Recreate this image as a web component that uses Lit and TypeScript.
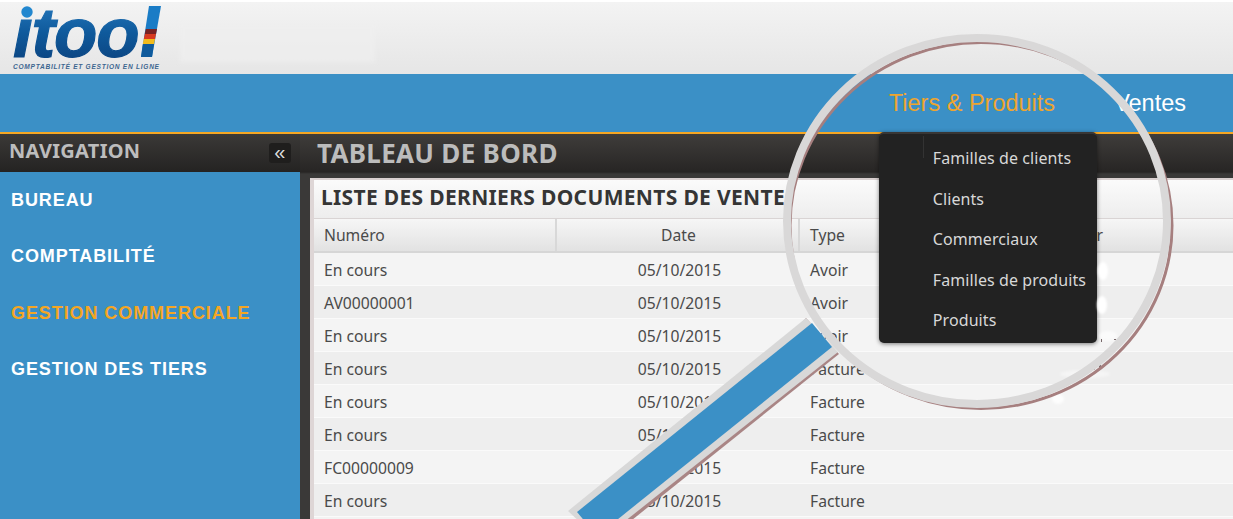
import { LitElement, html, css, svg } from "lit";
import { customElement } from "lit/decorators.js";

const rows: [string, string, string][] = [
  ["En cours", "05/10/2015", "Avoir"],
  ["AV00000001", "05/10/2015", "Avoir"],
  ["En cours", "05/10/2015", "Avoir"],
  ["En cours", "05/10/2015", "Facture"],
  ["En cours", "05/10/2015", "Facture"],
  ["En cours", "05/10/2015", "Facture"],
  ["FC00000009", "05/10/2015", "Facture"],
  ["En cours", "05/10/2015", "Facture"],
];
const side = [
  ["BUREAU", false],
  ["COMPTABILITÉ", false],
  ["GESTION COMMERCIALE", true],
  ["GESTION DES TIERS", false],
] as const;
const drop = ["Familles de clients", "Clients", "Commerciaux", "Familles de produits", "Produits"];

@customElement("app-root")
export class AppRoot extends LitElement {
  static styles = css`
    :host { display: block; width: 1233px; height: 519px; position: relative; overflow: hidden; font-family: "Noto Sans", sans-serif; background: #fff; }
    .top { height: 72px; margin-top: 2px; background: linear-gradient(#f3f3f3, #e6e6e6); display: flex; align-items: flex-start; }
    .logo { display: block; flex: none; }
    .patch { width: 195px; height: 38px; margin: 22px 0 0 10px; background: #efefef; filter: blur(2px); opacity: .7; }
    .logo-text { font-family: "Liberation Sans", sans-serif; font-weight: 700; font-style: italic; font-size: 71px; letter-spacing: -1.2px; stroke: url(#lg); stroke-width: 1.2px; }
    .logo-sub { font-family: "Liberation Sans", sans-serif; font-weight: 700; font-style: italic; font-size: 6.6px; letter-spacing: .72px; fill: #3d6690; }
    .bar { height: 58px; background: #3b90c6; border-bottom: 2px solid #f5a623; display: flex; justify-content: flex-end; align-items: center; gap: 59px; padding-right: 47px; font-family: "Liberation Sans", sans-serif; font-size: 23.5px; color: #fff; }
    .bar .item { position: relative; line-height: 58px; }
    .bar .on { color: #eea52f; }
    .drop { position: absolute; left: -10px; top: 58px; width: 218px; height: 211px; box-sizing: border-box; background: #222; border-radius: 5px; border-top: 2px solid #383635; box-shadow: 0 1px 4px rgba(0,0,0,.5); padding: 4px 0 0 54px; font-family: "Noto Sans", sans-serif; font-size: 16px; letter-spacing: .08px; line-height: 40.5px; color: #d8d8d8; z-index: 2; white-space: nowrap; }
    .drop::before { content: ""; position: absolute; left: 44px; top: 2px; width: 1px; height: 22px; background: #333; }
    .body { display: grid; grid-template-columns: 300px 1fr; height: 385px; }
    .side { background: #3b90c6; padding-left: 1px; box-sizing: border-box; display: flex; flex-direction: column; }
    .side-head { margin-left: -1px; height: 38px; box-sizing: border-box; background: linear-gradient(#3b3937, #242322); display: flex; align-items: center; justify-content: space-between; padding: 0 9px; color: #bdbdbd; font-size: 20px; font-weight: 700; letter-spacing: .3px; }
    .side-head span:first-child { line-height: 34px; height: 38px; }
    .collapse { width: 22px; height: 20px; border-radius: 3px; background: #1f1e1d; color: #ddd; font-size: 20px; font-weight: 400; line-height: 18px; text-align: center; font-family: "Liberation Sans", sans-serif; }
    .side ul { list-style: none; margin: 0; padding: 0 0 0 10px; }
    .side li { height: 56.3px; line-height: 56px; font-size: 18px; font-weight: 700; color: #fff; font-family: "Liberation Sans", sans-serif; white-space: nowrap; letter-spacing: .92px; }
    .side li.on { color: #f5a623; }
    .main { background: linear-gradient(#3f3d3b, #272524 38px, #3a3938 40px); padding: 0 0 0 10px; display: flex; flex-direction: column; min-width: 0; }
    .title { height: 44px; flex: none; padding-left: 7px; font-size: 26px; font-weight: 700; color: #bcbcbc; line-height: 38px; letter-spacing: .3px; white-space: nowrap; }
    .panel { flex: 1; background: #f3f3f3; border-top: 2px solid #d9d0d0; border-left: 4px solid #ded6d6; display: flex; flex-direction: column; min-height: 0; overflow: hidden; }
    .panel h2 { margin: 0 0 0 -3px; height: 39px; flex: none; box-sizing: border-box; border-bottom: 1px solid #d9d4d4; background: linear-gradient(#fbfbfb, #ededed); padding-left: 10px; font-size: 21px; font-weight: 700; line-height: 34px; color: #353535; white-space: nowrap; letter-spacing: .33px; }
    .row { display: grid; grid-template-columns: 243px 243px 1fr 168px; height: 33px; line-height: 34px; font-size: 15.7px; color: #4a4a4a; flex: none; box-sizing: border-box; border-bottom: 1px solid #fafafa; }
    .row > div { padding-left: 10px; white-space: nowrap; }
    .row > .c { padding: 0 0 0 2px; text-align: center; }
    .row:nth-child(odd) { background: #f4f4f4; }
    .row:nth-child(even) { background: #eeeeee; }
    .row.head { height: 34px; line-height: 32px; background: linear-gradient(#f6f6f6, #e2e2e2); border-bottom: 2px solid #d6d6d6; }
    .row.head > div { border-right: 2px solid #d8d8d8; }
    .row.head > div:nth-child(3), .row.head > div:nth-child(4) { border-right: 0; }
    .lens { position: absolute; left: 0; top: 0; z-index: 3; pointer-events: none; }
  `;

  render() {
    return html`
      <div class="top">
        <svg class="logo" width="170" height="72" viewBox="0 2 170 72" aria-label="itool">
          <defs>
            <linearGradient id="lg" x1="0" y1="0" x2="0" y2="1">
              <stop offset="0" stop-color="#2a7fc4" /><stop offset=".5" stop-color="#0f5a9c" /><stop offset="1" stop-color="#0a3d78" />
            </linearGradient>
          </defs>
          <circle cx="27" cy="12" r="5.7" fill="#2287cf" />
          <text class="logo-text" x="13" y="57" fill="url(#lg)">ıtoo</text>
          <path d="M149 6 L161 6 L152 57 L141 57 Z" fill="#1a7cc6" />
          <path d="M145.800 29 L157 29 L156 34 L144.800 34 Z" fill="#7a2222" />
          <path d="M144.800 34 L156 34 L155 39 L143.800 39 Z" fill="#d83a20" />
          <path d="M143.800 39 L155 39 L154 44 L142.800 44 Z" fill="#f2bb1c" />
          <path d="M142.800 44 L154 44 L152 57 L141 57 Z" fill="#0f5a9c" />
          <text class="logo-sub" x="13" y="69">COMPTABILITÉ ET GESTION EN LIGNE</text>
        </svg>
        <div class="patch"></div>
      </div>
      <div class="bar">
        <div class="item on">Tiers &amp; Produits
          <div class="drop">${drop.map((d) => html`<div>${d}</div>`)}</div>
        </div>
        <div class="item">Ventes</div>
      </div>
      <div class="body">
        <aside class="side">
          <div class="side-head"><span>NAVIGATION</span><span class="collapse">«</span></div>
          <ul>${side.map(([t, on]) => html`<li class=${on ? "on" : ""}>${t}</li>`)}</ul>
        </aside>
        <section class="main">
          <div class="title">TABLEAU DE BORD</div>
          <div class="panel">
            <h2>LISTE DES DERNIERS DOCUMENTS DE VENTE</h2>
            <div class="row head"><div>Numéro</div><div class="c">Date</div><div>Type</div><div>Tier</div></div>
            ${rows.map((r) => html`<div class="row"><div>${r[0]}</div><div class="c">${r[1]}</div><div>${r[2]}</div><div></div></div>`)}
          </div>
        </section>
      </div>
      <svg class="lens" width="1233" height="519" viewBox="0 0 1233 519">
        ${svg`
          <defs><filter id="soft"><feGaussianBlur stdDeviation="1.2" /></filter></defs>
          <g fill="#ffffff" filter="url(#soft)">
            <ellipse cx="1103" cy="271" rx="5" ry="9" />
            <ellipse cx="1102" cy="305" rx="5" ry="9" />
            <ellipse cx="1108" cy="336" rx="9" ry="5" opacity=".6" />
            <ellipse cx="1058" cy="399" rx="6" ry="5" opacity=".8" />
            <ellipse cx="1085" cy="374" rx="25" ry="4" opacity=".4" />
          </g>
          <g fill="#77686a">
            <rect x="1089" y="366" width="2" height="5" />
            <rect x="1093" y="365" width="2" height="5" />
            <rect x="1099" y="365" width="2" height="3" />
            <rect x="1101" y="339" width="1" height="3" />
            <rect x="1114" y="339" width="2" height="1" />
          </g>
          <polygon points="839,354 632,520 600,541 806,318" fill="#a98585" />
          <polygon points="806,318 838,352 600,541 568,511" fill="#d8d8d8" />
          <polygon points="812,323 832,347 597,536 577,512" fill="#3b90c6" />
          <ellipse cx="981" cy="225.500" rx="191" ry="183" fill="none" stroke="#a67f7f" stroke-width="3" />
          <ellipse cx="977" cy="221" rx="190" ry="183" fill="none" stroke="#d9d8d8" stroke-width="8" />
        `}
      </svg>
    `;
  }
}
